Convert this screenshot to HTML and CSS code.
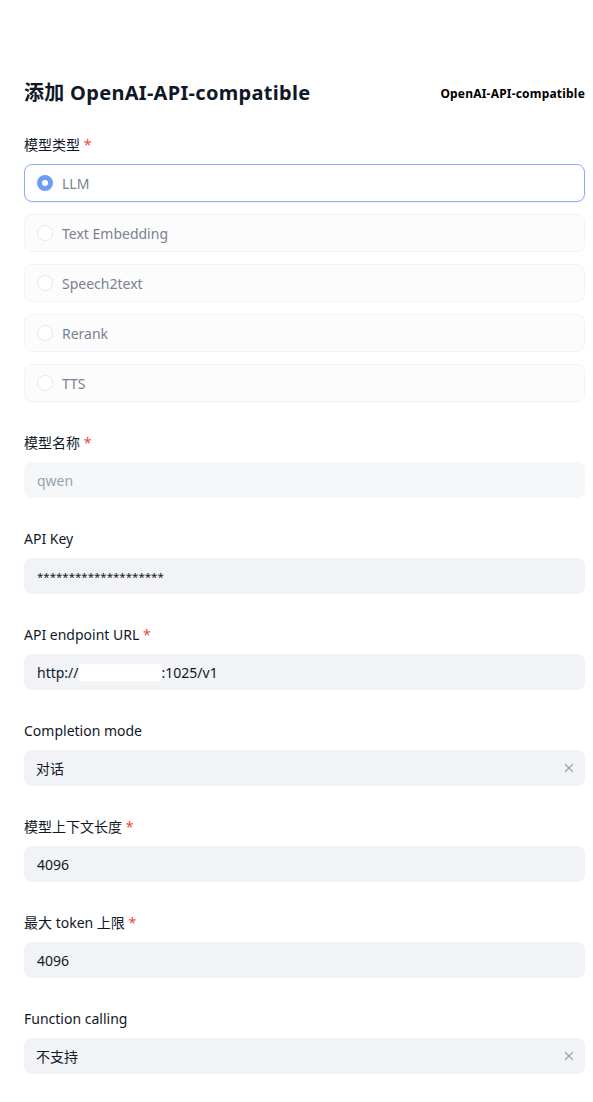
FILE: index.html
```html
<!DOCTYPE html>
<html lang="zh">

<head>
  <meta charset="UTF-8" />
  <meta name="viewport" content="width=device-width, initial-scale=1.0" />
  <title>添加 OpenAI-API-compatible</title>
  <link rel="stylesheet" href="styles.css">
</head>

<body>
  <div class="modal">
    <div class="cabecera">
      <h1>添加 OpenAI-API-compatible</h1>
      <span class="proveedor">OpenAI-API-compatible</span>
    </div>

    <div class="campo">
      <label>模型类型 <span class="req">*</span></label>
      <div class="radios">
        <div class="radio activo"><span class="circulo"></span>LLM</div>
        <div class="radio"><span class="circulo"></span>Text Embedding</div>
        <div class="radio"><span class="circulo"></span>Speech2text</div>
        <div class="radio"><span class="circulo"></span>Rerank</div>
        <div class="radio"><span class="circulo"></span>TTS</div>
      </div>
    </div>

    <div class="campo">
      <label>模型名称 <span class="req">*</span></label>
      <div class="entrada claro placeholder">qwen</div>
    </div>

    <div class="campo">
      <label>API Key</label>
      <div class="entrada clave">********************</div>
    </div>

    <div class="campo">
      <label>API endpoint URL <span class="req">*</span></label>
      <div class="entrada">http://<span class="tapado"></span>:1025/v1</div>
    </div>

    <div class="campo">
      <label>Completion mode</label>
      <div class="entrada selector">
        <span>对话</span>
        <svg width="10" height="10" viewBox="0 0 10 10"><path d="M1 1L9 9M9 1L1 9" stroke="#9ca3af" stroke-width="1.2" /></svg>
      </div>
    </div>

    <div class="campo">
      <label>模型上下文长度 <span class="req">*</span></label>
      <div class="entrada">4096</div>
    </div>

    <div class="campo">
      <label>最大 token 上限 <span class="req">*</span></label>
      <div class="entrada">4096</div>
    </div>

    <div class="campo">
      <label>Function calling</label>
      <div class="entrada selector">
        <span>不支持</span>
        <svg width="10" height="10" viewBox="0 0 10 10"><path d="M1 1L9 9M9 1L1 9" stroke="#9ca3af" stroke-width="1.2" /></svg>
      </div>
    </div>
  </div>
</body>

</html>
```

FILE: styles.css
```css
body {
  margin: 0;
  background: white;
  font-family: "Noto Sans", "Noto Sans CJK SC", sans-serif;
  color: #101828;
}

.modal {
  padding: 79px 8px 28px 24px;
}

.cabecera {
  display: flex;
  justify-content: space-between;
  align-items: center;
  margin-bottom: 28px;
}

h1 {
  margin: 0;
  font-size: 20px;
  line-height: 28px;
  font-weight: 700;
  letter-spacing: 0.3px;
}

.proveedor {
  font-size: 12px;
  font-weight: 700;
  color: #000;
  letter-spacing: 0.2px;
}

.campo {
  margin-bottom: 31px;
}

label {
  display: block;
  font-size: 14px;
  line-height: 20px;
  margin-bottom: 9px;
}

.req {
  color: #f04438;
}

.radios {
  display: flex;
  flex-direction: column;
  gap: 12px;
}

.radio {
  display: flex;
  align-items: center;
  height: 36px;
  padding: 0 12px;
  border: 1px solid #f2f4f7;
  border-radius: 8px;
  background: #fcfcfd;
  font-size: 14px;
  color: #7a8190;
}

.radio .circulo {
  width: 14px;
  height: 14px;
  border: 1px solid #e4e7ec;
  border-radius: 50%;
  margin-right: 9px;
  box-sizing: content-box;
  background: white;
}

.radio.activo {
  border-color: #84adff;
  background: white;
  box-shadow: 0 1px 2px rgba(16, 24, 40, 0.06);
}

.radio.activo .circulo {
  width: 6px;
  height: 6px;
  border: 5px solid #6f9cf8;
}

.entrada {
  display: flex;
  align-items: center;
  height: 36px;
  padding: 0 13px;
  border-radius: 8px;
  background: #f2f3f6;
  font-size: 14px;
}

.entrada.claro {
  background: #f6f7f9;
}

.placeholder {
  color: #98a2b3;
}

.clave {
  font-size: 11.5px;
}

.tapado {
  display: inline-block;
  width: 83px;
  height: 17px;
  background: white;
}

.selector {
  justify-content: space-between;
  padding: 0 11px 0 12px;
}
```
